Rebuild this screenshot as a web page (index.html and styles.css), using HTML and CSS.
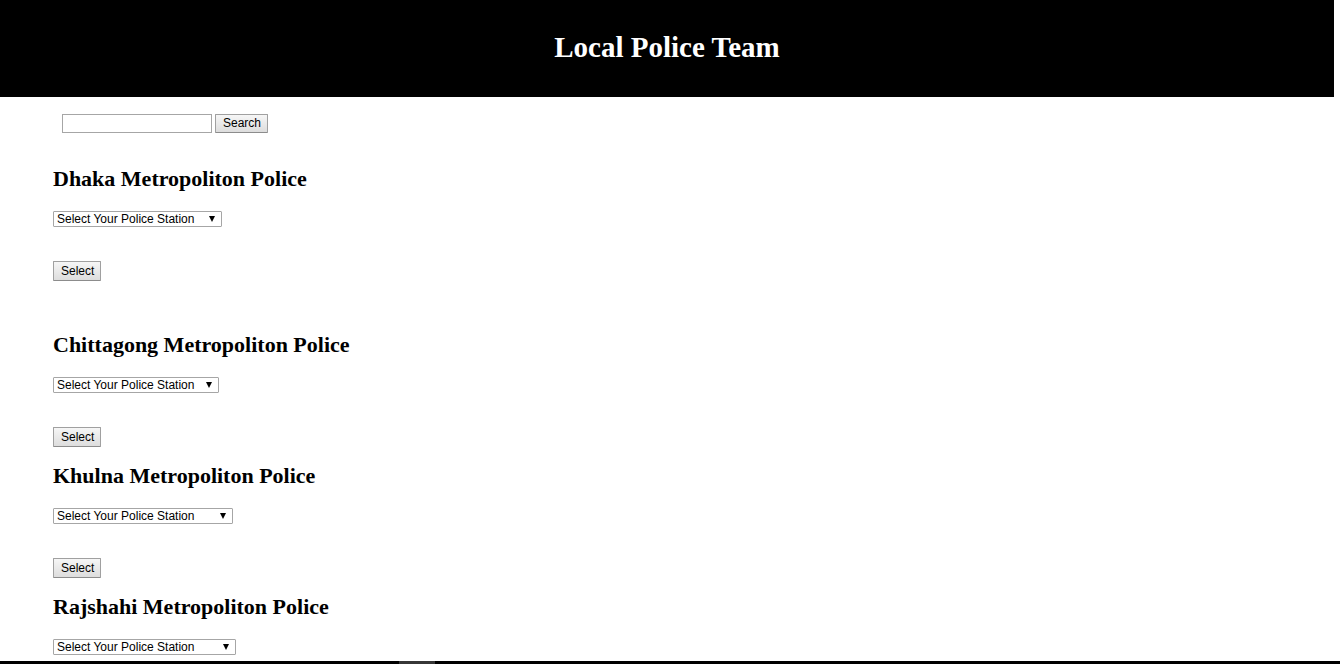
FILE: index.html
```html
<!DOCTYPE html>
<html lang="en">
<head>
<meta charset="utf-8">
<title>Local Police Team</title>
<link rel="stylesheet" href="styles.css">
</head>
<body>
<div class="page">
  <header class="banner"><h1 class="banner-title">Local Police Team</h1></header>
  <main class="content">
    <form class="search">
      <input class="search-box" type="text" aria-label="Search police stations">
      <button class="button" type="button">Search</button>
    </form>
    <section class="unit unit-spaced">
      <h2 class="unit-title" id="dhaka">Dhaka Metropoliton Police</h2>
      <div class="picker picker-dhaka"><select class="station" aria-labelledby="dhaka"><option>Select Your Police Station</option></select></div>
      <button class="button button-select" type="button">Select</button>
    </section>
    <section class="unit">
      <h2 class="unit-title" id="chittagong">Chittagong Metropoliton Police</h2>
      <div class="picker picker-chittagong"><select class="station" aria-labelledby="chittagong"><option>Select Your Police Station</option></select></div>
      <button class="button button-select" type="button">Select</button>
    </section>
    <section class="unit">
      <h2 class="unit-title" id="khulna">Khulna Metropoliton Police</h2>
      <div class="picker picker-khulna"><select class="station" aria-labelledby="khulna"><option>Select Your Police Station</option></select></div>
      <button class="button button-select" type="button">Select</button>
    </section>
    <section class="unit">
      <h2 class="unit-title" id="rajshahi">Rajshahi Metropoliton Police</h2>
      <div class="picker picker-rajshahi"><select class="station" aria-labelledby="rajshahi"><option>Select Your Police Station</option></select></div>
    </section>
  </main>
</div>
<div class="taskbar"><div class="taskbar-item"></div></div>
</body>
</html>
```
FILE: styles.css
```css
* {
  box-sizing: border-box;
}

body {
  display: flex;
  flex-direction: column;
  height: 100vh;
  margin: 0;
  background: #fff;
  color: #000;
  font-family: "Liberation Serif", "Times New Roman", serif;
}

.page {
  flex: 1;
  min-height: 0;
  overflow: hidden;
}

.banner {
  margin-right: 6px;
  padding: 30px 0 33px;
  background: #000;
  color: #fff;
  text-align: center;
}

.banner-title {
  margin: 0;
  font-size: 29px;
  line-height: 34px;
}

.content {
  padding: 17px 53px 0;
}

.search {
  display: flex;
  gap: 3px;
  margin: 0 0 33px 9px;
}

.search-box {
  width: 150px;
  height: 19px;
  padding: 1px;
  border: 1px solid #a6a6a6;
  font: 12px "Liberation Sans", Arial, sans-serif;
}

.button {
  height: 19px;
  padding: 0 6px 1px 7px;
  border: 1px solid #a0a0a0;
  border-bottom-color: #8c8c8c;
  border-radius: 1px;
  background: linear-gradient(#f6f6f6, #dddddd);
  color: #000;
  font: 12px/16px "Liberation Sans", Arial, sans-serif;
}

.button-select {
  height: 20px;
}

.unit {
  display: flex;
  flex-direction: column;
  align-items: flex-start;
  margin-bottom: 16px;
}

.unit-spaced {
  margin-bottom: 51px;
}

.unit-title {
  margin: 0 0 19px;
  font-size: 22px;
  line-height: 26px;
}

.picker {
  position: relative;
  display: flex;
  margin-bottom: 34px;
}

.picker::after {
  content: "";
  position: absolute;
  top: 5px;
  right: 7px;
  width: 6px;
  height: 6px;
  background: #000;
  clip-path: polygon(0 0, 100% 0, 50% 100%);
  pointer-events: none;
}

.picker-dhaka {
  width: 169px;
}

.picker-chittagong {
  width: 166px;
}

.picker-khulna {
  width: 180px;
}

.picker-rajshahi {
  width: 183px;
}

.station {
  appearance: none;
  width: 100%;
  height: 16px;
  padding: 0 3px;
  border: 1px solid #a6a6a6;
  border-radius: 1px;
  background: #fff;
  color: #000;
  font: 12px/14px "Liberation Sans", Arial, sans-serif;
}

.taskbar {
  height: 3px;
  padding-left: 399px;
  background: #000;
}

.taskbar-item {
  width: 36px;
  height: 100%;
  background: #363636;
}
```
